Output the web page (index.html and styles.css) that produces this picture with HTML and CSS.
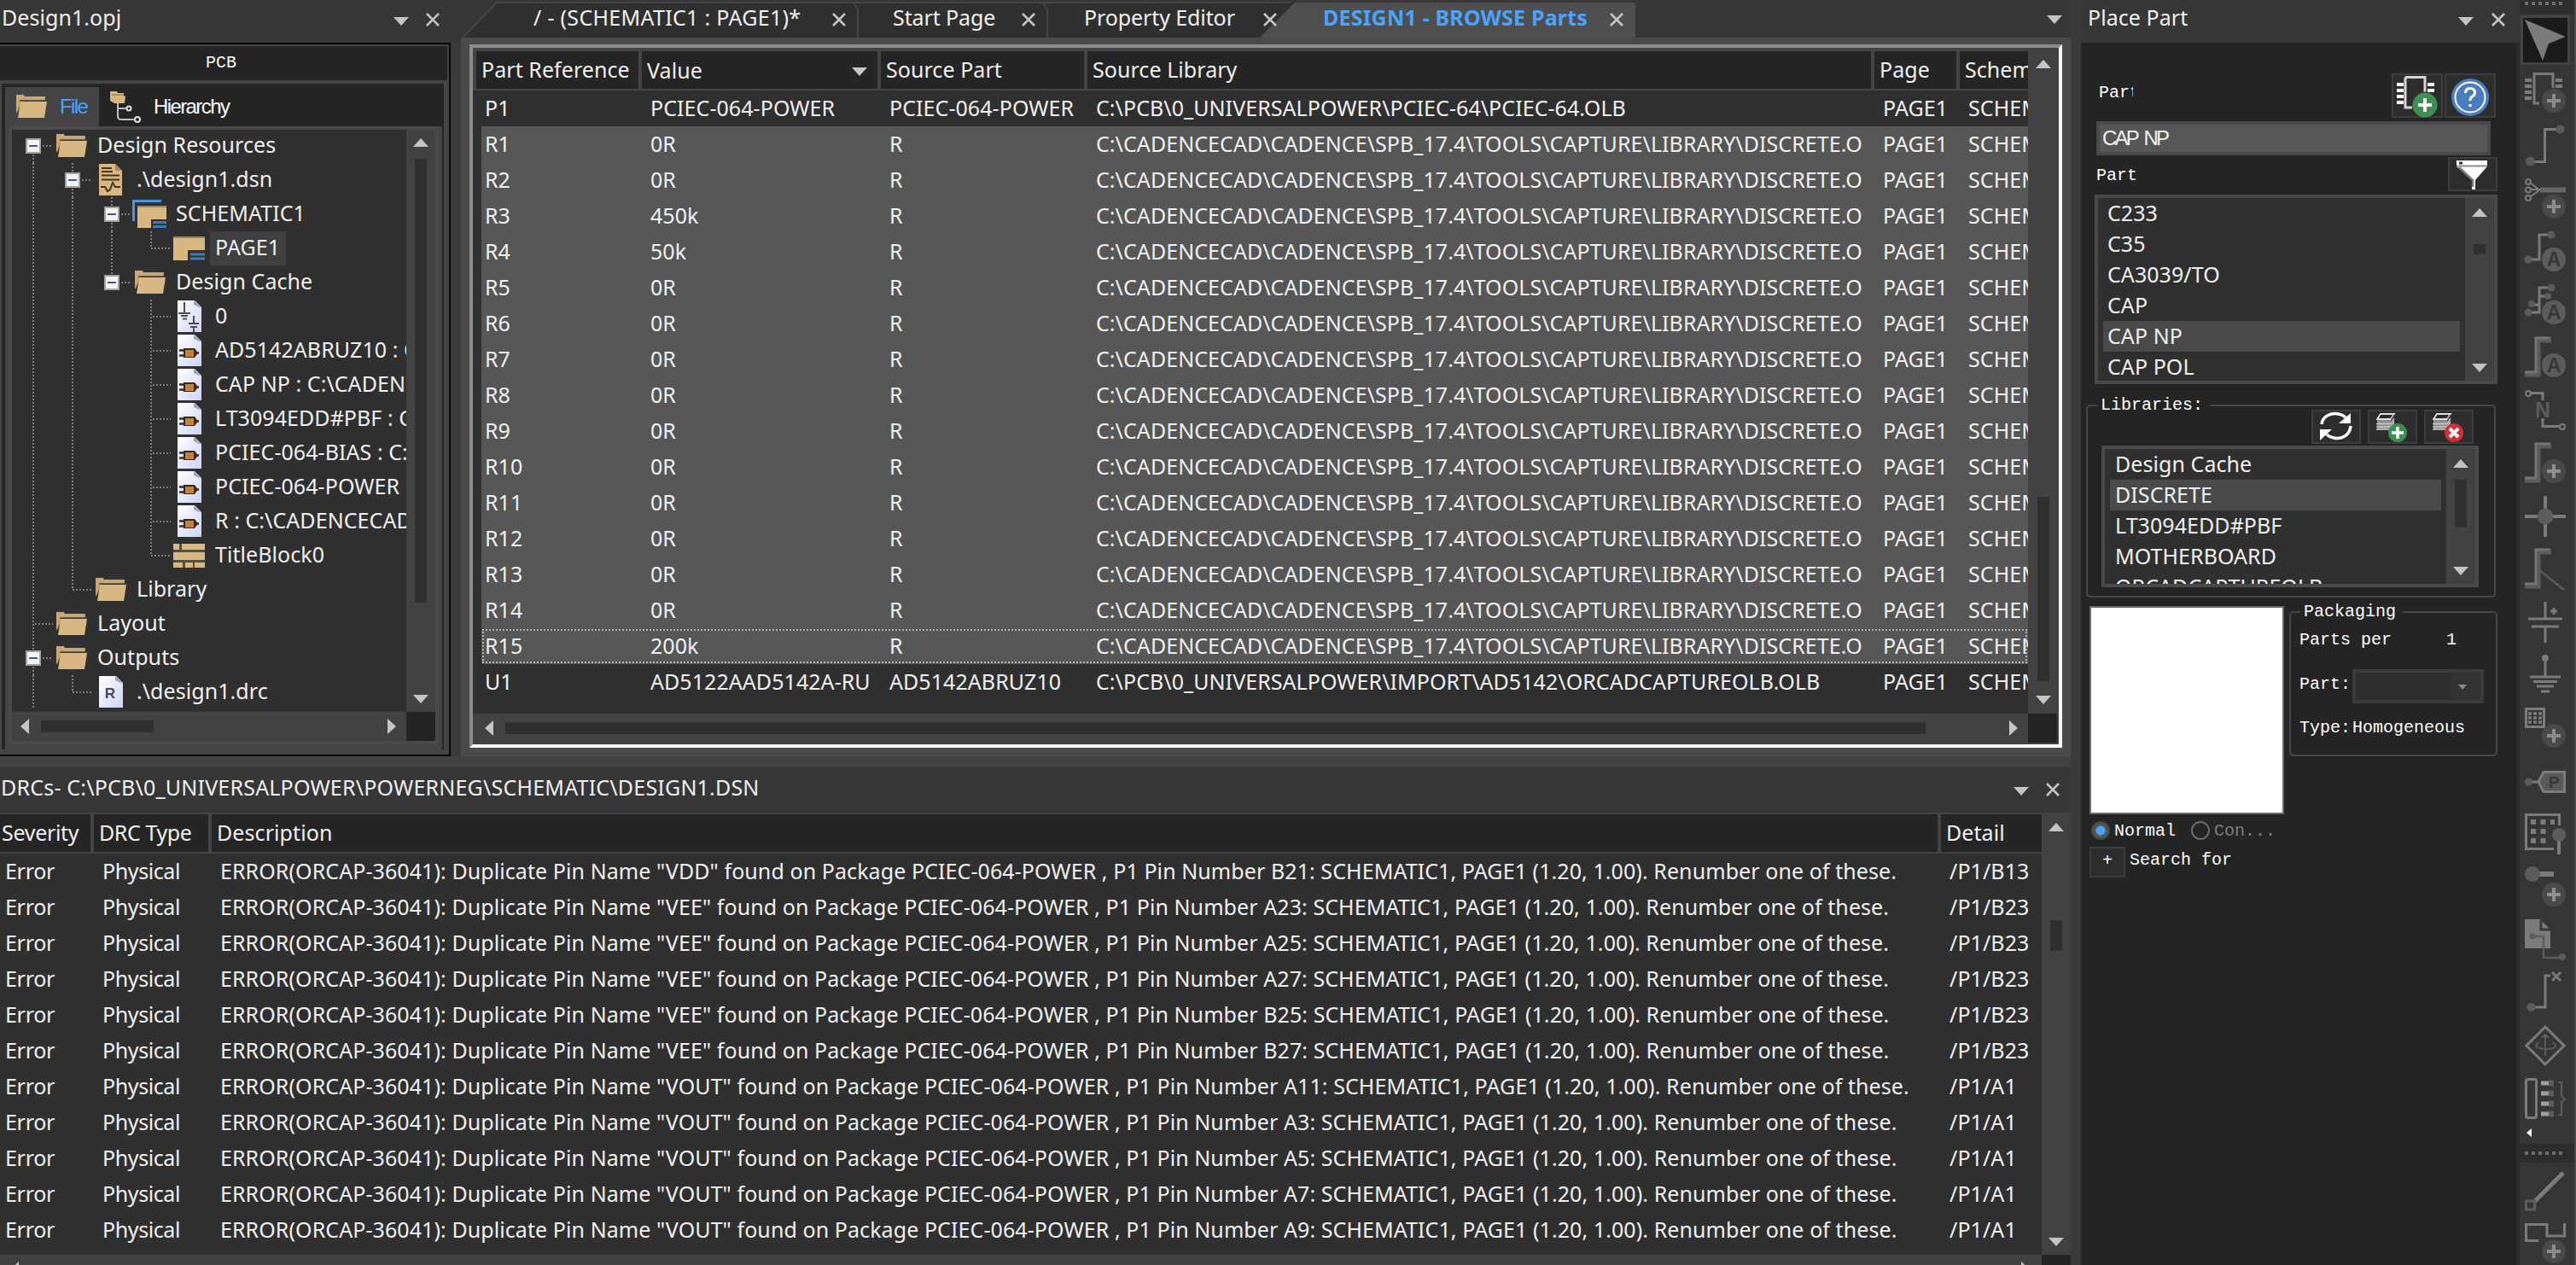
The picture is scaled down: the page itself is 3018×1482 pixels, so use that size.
FILE: index.html
```
<!DOCTYPE html>
<html lang="en">
<head>
    <meta charset="UTF-8">
    <meta name="viewport" content="width=device-width, initial-scale=1.0">
    <title>Design1.opj</title>
    <link rel="stylesheet" href="styles.css">
</head>
<body>
    <!-- shared icons -->
    <svg class="defs" width="0" height="0">
        <defs>
            <linearGradient id="paper" x1="0" y1="0" x2="1" y2="1">
                <stop offset="0" stop-color="#ffffff"/>
                <stop offset="1" stop-color="#ccd3f5"/>
            </linearGradient>
            <symbol id="i-folder" viewBox="0 0 38 30">
                <path d="M1 1h9l1 2h24v5H8L2 22H1z" fill="#b3925f"/>
                <path d="M1 1h9v2h24v4H6L2 20H1z" fill="#d9b783" opacity=".6"/>
                <path d="M6 9h31l-3 19H3z" fill="#d9b783"/>
                <path d="M5 8h32" stroke="#4a4032" stroke-width="1.500"/>
            </symbol>
            <symbol id="i-dsn" viewBox="0 0 30 40">
                <path d="M1 1h19l8 8v29H1z" fill="#d9b783"/>
                <path d="M20 1l8 8h-8z" fill="#a88755"/>
                <path d="M4 6h12M4 10h13M4 14.500h21M4 19.500h21" stroke="#40351f" stroke-width="2"/>
                <path d="M3 28h5l3 5 3-2 3-8 3 5h6" fill="none" stroke="#40351f" stroke-width="2"/>
            </symbol>
            <symbol id="i-schematic" viewBox="0 0 42 34">
                <path d="M1.500 25V1.500H34" fill="none" stroke="#4a96e0" stroke-width="3"/>
                <path d="M6 7h34v16H22v10H6z" fill="#d9b783"/>
                <path d="M6 8h34" stroke="#a08355" stroke-width="2"/>
                <path d="M24 26.500h16M24 31.500h16" stroke="#3f7ab8" stroke-width="3"/>
            </symbol>
            <symbol id="i-page" viewBox="0 0 38 28">
                <path d="M0 0h37v16H17v12H0z" fill="#d9b783"/>
                <path d="M0 1h37" stroke="#a08355" stroke-width="2"/>
                <path d="M20 21h17M20 26h17" stroke="#3f7ab8" stroke-width="3"/>
            </symbol>
            <symbol id="i-paper" viewBox="0 0 30 38">
                <path d="M1 0h20l8 8v29H1z" fill="url(#paper)"/>
                <path d="M20 0l9 9-9-4z" fill="#9a9fac"/>
            </symbol>
            <symbol id="i-power" viewBox="0 0 30 38">
                <use href="#i-paper"/>
                <path d="M9 2v12M2 15h14M5 18h8M7 21.500h5M20 18v8M14 27h12M16 31h8M20 31v6" fill="none" stroke="#4c4c55" stroke-width="2"/>
            </symbol>
            <symbol id="i-part" viewBox="0 0 30 38">
                <use href="#i-paper"/>
                <path d="M3 18.500h9M3 24.500h9M20 21.500h6" stroke="#332a22" stroke-width="2.500"/>
                <path d="M8 16h13l4 5.500-4 5.500H8z" fill="#332a22"/>
                <path d="M10 18h10v8H10z" fill="#c8813c"/>
            </symbol>
            <symbol id="i-drc" viewBox="0 0 30 38">
                <use href="#i-paper"/>
                <text x="14" y="26" text-anchor="middle" class="glyph" font-size="17" fill="#4a4a50">R</text>
            </symbol>
            <symbol id="i-title" viewBox="0 0 38 28">
                <path d="M0 0h37v28H0z" fill="#5c4f3a"/>
                <path d="M0 0h7v7H0zM10 0h27v7H10zM0 10h37v9H0zM0 22h11v6H0zM14 22h9v6h-9zM25 22h12v6H25z" fill="#d9b783"/>
            </symbol>
            <symbol id="i-tree" viewBox="0 0 38 38">
                <path d="M1 1h8l1 2h7v3l2 1-1 8H6L1 12z" fill="#d9b783"/>
                <path d="M3 5h14" stroke="#a08355" stroke-width="1.500"/>
                <path d="M10 15v15q0 4 4 4h15M10 21h10" fill="none" stroke="#bdbdbd" stroke-width="2"/>
                <circle cx="23" cy="21" r="2.500" fill="none" stroke="#e0e0e0" stroke-width="2"/>
                <circle cx="33" cy="34" r="3" fill="none" stroke="#e0e0e0" stroke-width="2"/>
            </symbol>
            <symbol id="i-minus" viewBox="0 0 18 18">
                <rect x="1" y="1" width="16" height="16" fill="#f4f4f4" stroke="#a3a3a3" stroke-width="2"/>
                <path d="M4 9h10" stroke="#41539c" stroke-width="2"/>
            </symbol>
            <symbol id="i-x" viewBox="0 0 16 16">
                <path d="M1 1l14 14M15 1L1 15" stroke="#c4c4c4" stroke-width="2.600"/>
            </symbol>
            <symbol id="i-stack" viewBox="0 0 48 34">
                <path d="M5 1h16l-4 6H1z" fill="#2a2a2a" stroke="#e0e0e0" stroke-width="1.800"/>
                <path d="M1 8h16v11H1z" fill="#8f8f8f"/>
                <path d="M17 8l4-7v12l-4 6z" fill="#4a4a4a"/>
                <path d="M0 12.500h17l4-6M0 16h17l4-6M0 19h17l4-6" fill="none" stroke="#c9c9c9" stroke-width="1.500"/>
            </symbol>
        </defs>
    </svg>

    <div class="app">
        <div class="workspace">
            <div class="upper">
                <section class="project">
                    <div class="titlebar">
                        <span>Design1.opj</span>
                        <span class="down"></span>
                        <svg class="close"><use href="#i-x"/></svg>
                    </div>
                    <div class="project-box">
                        <div class="pcb">PCB</div>
                        <div class="project-inner">
                            <div class="project-tabs">
                                <div class="ptab active"><svg width="38" height="30"><use href="#i-folder"/></svg>File</div>
                                <div class="ptab"><svg width="38" height="38"><use href="#i-tree"/></svg>Hierarchy</div>
                            </div>
                            <div class="tree-frame">
                                <div class="tree" id="tree"></div>
                                <div class="vscroll tree-v"><i class="up"></i><b></b><i class="down"></i></div>
                                <div class="hscroll tree-h"><i class="left"></i><b></b><i class="right"></i></div>
                                <div class="corner"></div>
                            </div>
                        </div>
                    </div>
                </section>

                <section class="editor">
                    <div class="tabs">
                        <svg class="tab-shapes" width="1886" height="52" viewBox="0 0 1886 52">
                            <path d="M2 44L42 3H1000V44z" fill="#303030"/>
                            <path d="M2 44L42 3H972" fill="none" stroke="#464646" stroke-width="2"/>
                            <path d="M460 3l5 8V44M682 3l5 8V44" fill="none" stroke="#464646" stroke-width="2"/>
                            <path d="M936 44L977 3H1376V44z" fill="#4f4f4f"/>
                        </svg>
                        <div class="tab t1">/ - (SCHEMATIC1 : PAGE1)*<svg class="close"><use href="#i-x"/></svg></div>
                        <div class="tab t2">Start Page<svg class="close"><use href="#i-x"/></svg></div>
                        <div class="tab t3">Property Editor<svg class="close"><use href="#i-x"/></svg></div>
                        <div class="tab t4">DESIGN1 - BROWSE Parts<svg class="close"><use href="#i-x"/></svg></div>
                        <span class="down"></span>
                    </div>
                    <div class="browse">
                        <div class="browse-main">
                            <div class="parts-row head">
                                <span>Part Reference</span><span class="sorted">Value<i class="down"></i></span><span>Source Part</span><span>Source Library</span><span>Page</span><span>Schematic</span>
                            </div>
                            <div class="parts-body" id="parts"></div>
                        </div>
                        <div class="vscroll browse-v"><i class="up"></i><b></b><i class="down"></i></div>
                        <div class="hscroll browse-h"><i class="left"></i><b></b><i class="right"></i></div>
                        <div class="corner"></div>
                    </div>
                </section>
            </div>

            <section class="drc">
                <div class="titlebar drc-title">
                    <span>DRCs- C:\PCB\0_UNIVERSALPOWER\POWERNEG\SCHEMATIC\DESIGN1.DSN</span>
                    <span class="down"></span>
                    <svg class="close"><use href="#i-x"/></svg>
                </div>
                <div class="drc-grid">
                    <div class="drc-main">
                        <div class="drc-row head"><span>Severity</span><span>DRC Type</span><span>Description</span><span>Detail</span></div>
                        <div id="errors"></div>
                    </div>
                    <div class="vscroll drc-v"><i class="up"></i><b></b><i class="down"></i></div>
                    <div class="hscroll drc-h"><i class="left"></i><b></b><i class="right"></i></div>
                    <div class="corner"></div>
                </div>
            </section>
        </div>

        <section class="place">
            <div class="titlebar place-title">
                <span>Place Part</span>
                <span class="down"></span>
                <svg class="close"><use href="#i-x"/></svg>
            </div>
            <div class="place-body">
                <div class="place-top">
                    <span class="mono clip">Part</span>
                    <div class="btn big">
                        <svg width="56" height="50" viewBox="0 0 56 50">
                            <path d="M14 2.500h23v17M14 2.500v35.500h8" fill="none" stroke="#d6d6d6" stroke-width="3"/>
                            <path d="M4 11h8M4 18h8M4 25h8M4 32h8M40 11h8M40 18h8" stroke="#f4f4f4" stroke-width="4"/>
                            <circle cx="37" cy="35" r="14.500" fill="#3d8f54"/>
                            <path d="M37 27v16M29 35h16" stroke="#fff" stroke-width="4"/>
                        </svg>
                    </div>
                    <div class="btn big">
                        <svg width="56" height="50" viewBox="0 0 56 50">
                            <circle cx="28" cy="26" r="22" fill="#4a7cc0"/>
                            <circle cx="28" cy="26" r="17.500" fill="none" stroke="#fff" stroke-width="2"/>
                            <path d="M22.500 21q0-5.500 5.500-5.500t5.500 5q0 3-3 4.500-2.500 1.500-2.500 5" fill="none" stroke="#fff" stroke-width="3"/>
                            <path d="M26.500 34h3v3h-3z" fill="#fff"/>
                        </svg>
                    </div>
                </div>
                <div class="part-input">CAP NP</div>
                <div class="part-label">
                    <span class="mono">Part</span>
                    <div class="btn">
                        <svg width="54" height="36" viewBox="0 0 54 36">
                            <path d="M8 2h36v7L30 25v11h-4V25L8 9z" fill="#fff"/>
                            <path d="M8 8.500h36" stroke="#8c8c8c" stroke-width="2"/>
                            <path d="M11 10l16 15v8" fill="none" stroke="#777" stroke-width="2.500"/>
                            <path d="M11 3.500h4v3h-4z" fill="#333"/>
                        </svg>
                    </div>
                </div>
                <div class="listbox parts-list">
                    <div class="items"><p>C233</p><p>C35</p><p>CA3039/TO</p><p>CAP</p><p class="sel">CAP NP</p><p>CAP POL</p></div>
                    <div class="vscroll"><i class="up"></i><b></b><i class="down"></i></div>
                </div>
                <div class="group libraries">
                    <span class="legend mono">Libraries:</span>
                    <div class="lib-btns">
                        <div class="btn">
                            <svg width="54" height="34" viewBox="0 0 54 34">
                                <path d="M10 15C11 5 22 1 30 3q5 1 8 4M44 17C43 29 32 33 24 31q-5-1-8-4" fill="none" stroke="#fff" stroke-width="3.500"/>
                                <path d="M44 2v12H30zM8 34V21h14z" fill="#fff"/>
                            </svg>
                        </div>
                        <div class="btn">
                            <svg width="54" height="36" viewBox="-8 -2 54 36">
                                <use href="#i-stack" width="48" height="34"/>
                                <circle cx="25" cy="23" r="11" fill="#3d8f54"/>
                                <path d="M25 16v14M18 23h14" stroke="#fff" stroke-width="3.500"/>
                            </svg>
                        </div>
                        <div class="btn">
                            <svg width="54" height="36" viewBox="-8 -2 54 36">
                                <use href="#i-stack" width="48" height="34"/>
                                <circle cx="25" cy="23" r="11" fill="#cf3035"/>
                                <path d="M20 18l10 10M30 18L20 28" stroke="#fff" stroke-width="4"/>
                            </svg>
                        </div>
                    </div>
                    <div class="listbox lib-list">
                        <div class="items"><p>Design Cache</p><p class="sel">DISCRETE</p><p>LT3094EDD#PBF</p><p>MOTHERBOARD</p><p>ORCADCAPTUREOLB</p></div>
                        <div class="vscroll"><i class="up"></i><b></b><i class="down"></i></div>
                    </div>
                </div>
                <div class="preview-row">
                    <div class="preview"></div>
                    <div class="group packaging mono">
                        <span class="legend">Packaging</span>
                        <div class="pk-per"><span>Parts per</span><span>1</span></div>
                        <div class="pk-part"><span>Part:</span><div class="combo"><i class="down"></i></div></div>
                        <div class="pk-type"><span>Type:</span><span>Homogeneous</span></div>
                    </div>
                </div>
                <div class="radios mono">
                    <span class="radio on"></span><span class="r1">Normal</span>
                    <span class="radio"></span><span class="dim">Con...</span>
                </div>
                <div class="search mono"><div class="plus">+</div><span class="search-text">Search for<br>Part</span></div>
            </div>
        </section>

        <aside class="toolbar">
            <div class="grip"></div>
            <div class="tools" id="tools"></div>
            <div class="more"><i></i></div>
            <div class="grip lower"></div>
            <div class="tools" id="draw-tools"></div>
        </aside>
    </div>
    <script src="script.js"></script>
</body>
</html>
```
FILE: styles.css
```
* {
    box-sizing: border-box;
}
body {
    margin: 0;
    background: #3a3a3a;
    color: #f0f0f0;
    font: 25px "Noto Sans", sans-serif;
    letter-spacing: 0.06px;
    overflow: hidden;
}
.defs {
    position: absolute;
}
p {
    margin: 0;
}
.app {
    display: flex;
    width: 3018px;
    height: 1482px;
    overflow: hidden;
}
.workspace {
    width: 2426px;
    display: flex;
    flex-direction: column;
}
.upper {
    display: flex;
    height: 886px;
}
.mono {
    font: 20px "Liberation Mono", monospace;
    letter-spacing: 0;
    color: #fff;
}
.glyph {
    font-family: "Liberation Sans", sans-serif;
    font-weight: bold;
}

/* arrows */
.up, .down, .left, .right {
    display: block;
    flex: none;
    width: 18px;
    height: 10px;
    background: #c4c4c4;
}
.up {
    clip-path: polygon(50% 0, 100% 100%, 0 100%);
}
.down {
    clip-path: polygon(0 0, 100% 0, 50% 100%);
}
.left, .right {
    width: 10px;
    height: 18px;
}
.left {
    clip-path: polygon(100% 0, 100% 100%, 0 50%);
}
.right {
    clip-path: polygon(0 0, 100% 50%, 0 100%);
}
.close {
    width: 16px;
    height: 16px;
    flex: none;
}

/* scroll bars */
.vscroll {
    background: #424242;
    display: flex;
    flex-direction: column;
    align-items: center;
}
.vscroll b, .hscroll b {
    display: block;
    background: #303030;
}
.vscroll b {
    width: 14px;
}
.hscroll b {
    height: 14px;
}
.vscroll .down {
    margin-top: auto;
}
.hscroll {
    background: #424242;
    display: flex;
    align-items: center;
}
.hscroll .right {
    margin-left: auto;
}
.corner {
    background: #252525;
}

.titlebar {
    height: 50px;
    background: #373737;
    display: flex;
    line-height: 40px;
    white-space: nowrap;
}
.titlebar .down {
    margin: 20px 0 0 auto;
}
.titlebar .close {
    margin: 15px 0 0 20px;
}

/* project tree */
.project {
    width: 540px;
    background: #3b3b3b;
}
.project .titlebar {
    padding: 0 25px 0 2px;
}
.project-box {
    width: 528px;
    height: 836px;
    border: 2px solid #060606;
    border-left: 0;
    background: #444;
    padding: 2px 2px 0 0;
}
.pcb {
    height: 40px;
    background: #252525;
    font: 20px/40px "Liberation Mono", monospace;
    letter-spacing: 0;
    color: #fff;
    text-align: center;
    padding-right: 6px;
}
.project-inner {
    margin: 4px 4px 0 2px;
    height: 780px;
    background: #444;
    border-right: 2px solid #252525;
    border-left: 4px solid #252525;
}
.project-tabs {
    height: 50px;
    background: #252525;
    display: flex;
    padding-top: 4px;
    margin-right: -2px;
}
.ptab {
    display: flex;
    align-items: center;
    font: 24px "Liberation Sans", sans-serif;
    letter-spacing: -1.6px;
    color: #fff;
    padding-left: 12px;
    gap: 14px;
}
.ptab.active {
    width: 110px;
    background: #444;
    color: #4aa3ff;
}
.tree-frame {
    border: 4px solid #4a4a4a;
    margin-left: 4px;
    width: 504px;
    height: 724px;
    display: grid;
    grid-template: 682px 34px / 462px 34px;
}
.tree {
    background: #303030;
    overflow: hidden;
}
.node {
    display: flex;
    align-items: center;
    height: 40px;
    padding-left: 2px;
    white-space: nowrap;
    position: relative;
    top: -1px;
}
.node .cell {
    width: 46px;
    height: 40px;
    flex: none;
}
.node .icon {
    width: 46px;
    flex: none;
    display: flex;
    justify-content: center;
    padding-right: 2px;
}
.node .label {
    height: 40px;
    line-height: 36px;
    padding: 0 7px 0 6px;
}
.node .label.sel {
    background: #404040;
}
.tree-v {
    padding: 10px 0;
}
.tree-v b {
    margin-top: 14px;
    height: 520px;
}
.tree-h {
    padding: 0 12px 0 10px;
}
.tree-h b {
    margin-left: 14px;
    width: 132px;
}

/* editor */
.editor {
    width: 1886px;
    background: #4a4a4a;
}
.tabs {
    height: 44px;
    background: #373737;
    display: flex;
    position: relative;
    line-height: 40px;
    letter-spacing: 0.3px;
    white-space: nowrap;
    overflow: hidden;
}
.tab-shapes {
    position: absolute;
    left: 0;
    top: 0;
}
.tab {
    position: relative;
    display: flex;
    justify-content: space-between;
}
.tab .close {
    margin-top: 15px;
}
.t1 {
    margin-left: 85px;
    width: 366px;
}
.t2 {
    margin-left: 55px;
    width: 167px;
    letter-spacing: -0.1px;
}
.t3 {
    margin-left: 57px;
    width: 226px;
    letter-spacing: -0.1px;
}
.t4 {
    margin-left: 54px;
    width: 352px;
    color: #4aa3ff;
    font-weight: bold;
    letter-spacing: 0.2px;
}
.tabs > .down {
    margin: 18px 0 0 496px;
}
.browse {
    margin: 8px 0 0 10px;
    width: 1866px;
    height: 824px;
    border: 4px solid;
    border-color: #8c8c8c #f6f6f6 #f6f6f6 #8c8c8c;
    background: #424242;
    display: grid;
    grid-template: 780px 36px / 1822px 36px;
}
.browse-main {
    background: #303030;
    overflow: hidden;
}
.parts-row {
    display: grid;
    grid-template-columns: 194px 280px 242px 922px 100px 200px;
    height: 42px;
    line-height: 41px;
    white-space: nowrap;
}
.parts-row span {
    overflow: hidden;
}
.parts-row.head, .drc-row.head {
    background: #252525;
    line-height: 43px;
}
.parts-row.head {
    height: 50px;
    border-top: 4px solid #444;
    border-bottom: 2px solid #444;
    border-left: 4px solid #444;
}
.parts-row.head span {
    border-right: 4px solid #444;
    padding-left: 6px;
}
.sorted {
    display: flex;
    justify-content: space-between;
    align-items: center;
}
.sorted .down {
    margin: 4px 12px 0 0;
}
.parts-body .parts-row {
    margin-left: 10px;
}
.parts-body .parts-row span {
    padding-left: 4px;
}
.parts-row.sel {
    background: #575757;
}
.parts-row.focus {
    outline: 2px dotted #b4b4b4;
    outline-offset: -3px;
}
.browse-v {
    padding: 14px 0 11px;
}
.browse-v b {
    margin-top: 502px;
    height: 216px;
}
.browse-h {
    padding: 0 12px 2px 14px;
}
.browse-h b {
    margin-left: 14px;
    width: 1664px;
}
.browse .corner {
    margin: 0 2px 2px 0;
}

/* DRC list */
.drc {
    border-top: 12px solid #424242;
    height: 596px;
}
.drc-title {
    height: 54px;
    line-height: 48px;
    padding: 0 13px 0 1px;
    letter-spacing: 0.2px;
}
.drc-title .down {
    margin-top: 24px;
}
.drc-title .close {
    margin-top: 19px;
}
.drc-grid {
    display: grid;
    grid-template: 518px 12px / 2392px 34px;
}
.drc-main {
    background: #303030;
    overflow: hidden;
}
.drc-row {
    display: grid;
    grid-template-columns: 110px 138px 2026px 118px;
    height: 42px;
    line-height: 41px;
    letter-spacing: 0.08px;
    white-space: nowrap;
}
.drc-row span {
    padding-left: 10px;
}
.drc-row span:first-child {
    padding-left: 6px;
    letter-spacing: -0.3px;
}
.drc-row span:nth-child(2) {
    letter-spacing: -0.4px;
}
.drc-row.head {
    height: 48px;
    border-top: 2px solid #444;
    border-bottom: 2px solid #444;
}
.drc-row.head span {
    border-right: 4px solid #444;
    padding-left: 6px;
}
.drc-row.head span:first-child {
    padding-left: 2px;
    letter-spacing: -0.3px;
}
.drc-row.head span:last-child {
    border-right: 0;
}
.drc-v {
    padding: 12px 0 10px;
}
.drc-v b {
    margin-top: 104px;
    height: 36px;
}
.drc-h {
    padding: 16px 14px 0 12px;
    height: 12px;
    overflow: hidden;
}
.drc-h .left, .drc-h .right {
    margin-bottom: -2px;
}

/* place part */
.place {
    width: 526px;
    background: #252525;
    border-left: 12px solid #3b3b3b;
    border-right: 4px solid #2c2c2c;
}
.place-title {
    padding: 0 17px 0 8px;
    margin-right: -4px;
}
.place-title .close {
    margin-left: 21px;
}
.place-body {
    padding: 36px 22px 0 6px;
}
.place-top {
    display: flex;
    height: 56px;
    gap: 2px;
    padding: 0 2px 0 15px;
}
.place-top .clip {
    width: 40px;
    overflow: hidden;
    line-height: 46px;
    margin-right: auto;
}
.btn {
    width: 58px;
    height: 40px;
    border: 2px solid #3d3d3d;
    background: #2d2d2d;
    flex: none;
}
.btn.big {
    width: 60px;
    height: 52px;
}
.btn svg {
    display: block;
}
.part-input {
    margin: 0 8px 0 12px;
    height: 40px;
    border: 4px solid #4a4a4a;
    background: #575757;
    font: 24px/31px "Liberation Sans", sans-serif;
    letter-spacing: -2.8px;
    word-spacing: 4px;
    padding-left: 3px;
}
.part-label {
    display: flex;
    justify-content: space-between;
    height: 40px;
    margin: 2px 0 4px 12px;
}
.part-label .mono {
    line-height: 44px;
}
.listbox {
    border: 4px solid #4a4a4a;
    background: #303030;
    display: flex;
    overflow: hidden;
}
.items {
    flex: 1;
    overflow: hidden;
    padding: 0 6px;
}
.items p {
    height: 36px;
    line-height: 34px;
    padding-left: 6px;
}
.items .sel {
    background: #4a4a4a;
}
.listbox .vscroll {
    width: 34px;
    padding: 12px 0 10px;
}
.parts-list {
    width: 472px;
    height: 222px;
    margin-left: 10px;
}
.parts-list .items p {
    padding-left: 5px;
}
.parts-list .vscroll b {
    margin-top: 32px;
    height: 12px;
}
.group {
    border: 2px solid #464646;
    border-radius: 5px;
    position: relative;
}
.legend {
    position: absolute;
    top: -13px;
    left: 11px;
    background: #252525;
    padding: 0 8px 0 4px;
    line-height: 24px;
}
.libraries {
    width: 480px;
    height: 226px;
    margin-top: 24px;
}
.lib-btns {
    display: flex;
    gap: 8px;
    justify-content: flex-end;
    padding: 4px 24px 2px 0;
}
.lib-list {
    width: 442px;
    height: 166px;
    margin-left: 16px;
}
.lib-list .vscroll b {
    margin-top: 14px;
    height: 56px;
}
.preview-row {
    display: flex;
    gap: 6px;
    margin-top: 10px;
}
.preview {
    width: 228px;
    height: 244px;
    background: #fff;
    border: 2px solid #6b6b6b;
    margin-left: 4px;
}
.packaging {
    width: 244px;
    height: 170px;
    margin-top: 6px;
    padding: 18px 0 0 10px;
    line-height: 28px;
    flex: none;
}
.packaging .legend {
    left: 11px;
}
.pk-per {
    display: flex;
    justify-content: space-between;
    padding-right: 46px;
}
.pk-part {
    display: flex;
    margin-top: 20px;
    line-height: 36px;
    justify-content: space-between;
    padding-right: 14px;
}
.combo {
    width: 154px;
    height: 40px;
    border: 4px solid #3b3b3b;
    background: linear-gradient(90deg, #2d2d2d 112px, #333 112px);
    display: flex;
    justify-content: flex-end;
    padding: 14px 16px 0 0;
}
.combo .down {
    width: 10px;
    height: 6px;
    background: #8a8a8a;
}
.pk-type {
    display: flex;
    gap: 2px;
    margin-top: 15px;
}
.radios {
    display: flex;
    align-items: center;
    height: 38px;
    padding-left: 6px;
}
.radio {
    width: 22px;
    height: 22px;
    border-radius: 50%;
    border: 2px solid #6b6b6b;
}
.radio.on {
    background: radial-gradient(#4aa3ff 5px, #555 6px);
    border-color: #484848;
}
.r1 {
    margin: 0 18px 0 5px;
}
.dim {
    color: #7d7d7d;
    margin-left: 5px;
}
.search {
    display: flex;
    padding-left: 4px;
    gap: 5px;
    height: 36px;
    overflow: hidden;
}
.plus {
    width: 42px;
    height: 36px;
    border: 2px solid #3d3d3d;
    background: #2d2d2d;
    text-align: center;
    line-height: 30px;
}
.search-text {
    line-height: 30px;
    padding-top: 1px;
}

/* tool bar */
.toolbar {
    width: 66px;
    background: #363636;
    border-right: 2px solid #4a4a4a;
}
.grip {
    height: 16px;
    background: #2e2e2e;
    padding: 2px 0 0 6px;
}
.grip::before {
    content: "";
    display: block;
    width: 44px;
    height: 4px;
    background: repeating-linear-gradient(90deg, #6c6c6c 0 4px, transparent 4px 8px);
}
.grip.lower {
    height: 22px;
    padding-top: 9px;
}
.tool {
    height: 62px;
    width: 60px;
    display: flex;
    align-items: center;
    justify-content: center;
}
.tool.active {
    background: #1a1a1a;
    border: 3px solid #444;
    height: 58px;
    width: 58px;
    margin: 2px 1px;
}
.tool svg {
    width: 48px;
    height: 48px;
    fill: none;
    stroke: #7b7b7b;
    stroke-width: 3;
    overflow: visible;
}
.tool .f {
    fill: #5c5c5c;
    stroke: none;
}
.tool .l {
    fill: #7b7b7b;
    stroke: none;
}
.tool .d {
    stroke: #5c5c5c;
}
.tool .t {
    fill: #383838;
    stroke: none;
}
.more {
    height: 22px;
    padding: 4px 0 0 8px;
}
.more i {
    display: block;
    width: 6px;
    height: 10px;
    background: #fff;
    clip-path: polygon(100% 0, 100% 100%, 0 50%);
}
#draw-tools {
    padding-top: 2px;
}
```
FILE: script.js
```
// ---- project tree ----
// guides: v = line, t = tee, l = elbow, space = empty
// b = box with line below, m = line above and below, a = line above
const nodes = [
    ['b', 'folder', 'Design Resources'],
    ['vm', 'dsn', '.\\design1.dsn'],
    ['vvm', 'schematic', 'SCHEMATIC1'],
    ['vvvl', 'page', 'PAGE1', true],
    ['vva', 'folder', 'Design Cache'],
    ['vv t', 'power', '0'],
    ['vv t', 'part', 'AD5142ABRUZ10 : C:\\CADENCECAD'],
    ['vv t', 'part', 'CAP NP : C:\\CADENCECAD'],
    ['vv t', 'part', 'LT3094EDD#PBF : C:\\PCB'],
    ['vv t', 'part', 'PCIEC-064-BIAS : C:\\PCB'],
    ['vv t', 'part', 'PCIEC-064-POWER : C:\\PCB'],
    ['vv t', 'part', 'R : C:\\CADENCECAD\\CADENCE'],
    ['vv l', 'title', 'TitleBlock0'],
    ['vl', 'folder', 'Library'],
    ['t', 'folder', 'Layout'],
    ['m', 'folder', 'Outputs'],
    ['vl', 'drc', '.\\design1.drc']
];

const iconSize = {
    folder: [38, 30], dsn: [30, 40], schematic: [42, 34], page: [38, 28],
    power: [30, 38], part: [30, 38], drc: [30, 38], title: [38, 28]
};

const guidePath = {
    v: 'M23 0V40',
    t: 'M23 0V40M25 20H46',
    l: 'M23 0V20H46',
    b: 'M23 30V40M34 20H46',
    m: 'M23 0V10M23 30V40M34 20H46',
    a: 'M23 0V10M34 20H46',
    ' ': ''
};

function guide(type) {
    let box = '';
    if ('bma'.includes(type)) {
        box = '<use href="#i-minus" x="14" y="11" width="18" height="18"/>';
    }
    return `<svg class="cell" viewBox="0 0 46 40">
        <path d="${guidePath[type]}" fill="none" stroke="#7d7d7d" stroke-width="2" stroke-dasharray="2 2"/>${box}</svg>`;
}

document.getElementById('tree').innerHTML = nodes.map(([guides, icon, label, sel]) => {
    const [w, h] = iconSize[icon];
    return `<div class="node">${[...guides].map(guide).join('')}
        <span class="icon"><svg width="${w}" height="${h}"><use href="#i-${icon}"/></svg></span>
        <span class="label${sel ? ' sel' : ''}">${label}</span></div>`;
}).join('');

// ---- parts table ----
const discrete = 'C:\\CADENCECAD\\CADENCE\\SPB_17.4\\TOOLS\\CAPTURE\\LIBRARY\\DISCRETE.O';
const values = { 3: '450k', 4: '50k', 15: '200k' };
const parts = [['P1', 'PCIEC-064-POWER', 'PCIEC-064-POWER', 'C:\\PCB\\0_UNIVERSALPOWER\\PCIEC-64\\PCIEC-64.OLB', '']];
for (let i = 1; i <= 15; i++) {
    parts.push(['R' + i, values[i] || '0R', 'R', discrete, i === 15 ? 'sel focus' : 'sel']);
}
parts.push(['U1', 'AD5122AAD5142A-RU', 'AD5142ABRUZ10', 'C:\\PCB\\0_UNIVERSALPOWER\\IMPORT\\AD5142\\ORCADCAPTUREOLB.OLB', '']);

document.getElementById('parts').innerHTML = parts.map(([ref, value, part, lib, cls]) =>
    `<div class="parts-row ${cls}"><span>${ref}</span><span>${value}</span><span>${part}</span><span>${lib}</span><span>PAGE1</span><span>SCHEMATIC1</span></div>`
).join('');

// ---- DRC errors ----
const errors = [
    ['VDD', 'B21', 'B13'],
    ['VEE', 'A23', 'B23'],
    ['VEE', 'A25', 'B23'],
    ['VEE', 'A27', 'B23'],
    ['VEE', 'B25', 'B23'],
    ['VEE', 'B27', 'B23'],
    ['VOUT', 'A11', 'A1'],
    ['VOUT', 'A3', 'A1'],
    ['VOUT', 'A5', 'A1'],
    ['VOUT', 'A7', 'A1'],
    ['VOUT', 'A9', 'A1']
];

document.getElementById('errors').innerHTML = errors.map(([name, pin, detail]) =>
    `<div class="drc-row"><span>Error</span><span>Physical</span><span>ERROR(ORCAP-36041): Duplicate Pin Name "${name}" found on Package PCIEC-064-POWER , P1 Pin Number ${pin}: SCHEMATIC1, PAGE1 (1.20, 1.00). Renumber one of these.</span><span>/P1/${detail}</span></div>`
).join('');

// ---- tool bar ----
const plus = '<circle cx="34" cy="33" r="14" fill="#4a4a4a" stroke="none"/><path d="M34 25v16M26 33h16" stroke="#8c8c8c" stroke-width="4"/>';
const badgeA = '<circle class="f" cx="34" cy="33" r="14"/><text class="t glyph" x="34" y="41" font-size="23" text-anchor="middle">A</text>';
const bus = '<path d="M31 3H15V43H0" stroke="#5c5c5c" stroke-width="7"/><path d="M29 1H13V41H0" stroke="#747474" stroke-width="3"/>';

const tools = [
    '<path class="l" d="M0 0L48 20 28 28 21 48z"/>',
    '<path d="M17 36H11V1.500H33V18"/><path d="M0 9h8M0 16h8M0 23h8M0 30h8M36 9h8M36 16h8" stroke-width="4"/>' + plus,
    '<path d="M7 42.500H23.500V4.500H41"/><circle class="f" cx="6.500" cy="42" r="5.500"/><circle class="f" cx="41.500" cy="4.500" r="5"/>',
    '<path d="M6 5l12 9M6 13h12M6 22l12-9" stroke-width="2"/><path d="M18 13.500H48" stroke="#666" stroke-width="6"/><g stroke-width="2"><circle cx="4" cy="4" r="3"/><circle cx="4" cy="13.500" r="3"/><circle cx="4" cy="23" r="3"/></g>' + plus,
    '<path d="M4 33H17V4H31"/><circle class="f" cx="4" cy="33" r="4.500"/><circle class="f" cx="31" cy="4" r="4.500"/>' + badgeA,
    '<path d="M4 33H17V4H31M17 14h10M8 24h9"/><circle class="f" cx="4" cy="33" r="4.500"/><circle class="f" cx="31" cy="4" r="4.500"/><circle class="f" cx="27" cy="14" r="4"/><circle class="f" cx="8" cy="23" r="4"/>' + badgeA,
    bus + badgeA,
    '<path d="M7 3.500H21V12M21 33V42.500H41"/><circle cx="4" cy="4" r="3" stroke-width="2"/><circle cx="44" cy="43" r="3" stroke-width="2"/><text class="f glyph" x="21" y="32" font-size="25" text-anchor="middle">N</text>',
    bus + plus,
    '<path d="M24 0V48M0 24H48" stroke-width="4"/><circle class="f" cx="24" cy="24" r="9.500"/>',
    bus + '<path class="d" d="M17 25L46 48" stroke-width="2.500"/>',
    '<path d="M24 0V20M4 20H44M8 29H40M24 29V48M34 7v8M30 11h8"/>',
    '<path d="M24 5V26M6 26H42"/><path d="M10 31.500H38M14 37H34M19 43H29"/><circle class="l" cx="24" cy="4" r="4"/>',
    '<path d="M1.500 1.500H22.500V22.500H1.500z"/><path d="M4 7h16M4 12h16M4 17h16" stroke-width="3.500" stroke-dasharray="4 2"/>' + plus,
    '<path d="M4 25H17"/><path d="M22 13.500H46.500V36.500H22L16 25z" fill="#595959"/><circle class="f" cx="4.500" cy="25" r="4.500"/><text class="t glyph" x="34" y="32" font-size="19" text-anchor="middle">P</text>',
    '<path d="M34 41.500H1.500V1.500H40.500V14"/><path d="M7 10h28M7 21h18M7 32h18" stroke-width="6" stroke-dasharray="6 5.500"/><circle class="f" cx="40" cy="25" r="8"/><path d="M40 32V48" stroke-width="4"/>',
    '<path d="M14 9H34" stroke-width="6"/><circle class="f" cx="9" cy="9" r="9"/>' + plus,
    '<path class="l" d="M0 0H18L30 12V34H0z"/><path d="M19 1V12H30" stroke="#3a3a3a"/><path d="M10 20H22V45H42" stroke="#5c5c5c" stroke-width="2.500"/><circle class="f" cx="9" cy="20" r="3.500"/><circle class="f" cx="44" cy="44" r="4"/>',
    '<path d="M8 41H24V4H30"/><path d="M32 0l10 10M42 0L32 10"/><circle class="f" cx="7.500" cy="41" r="5"/>',
    '<path d="M24 2L46 24 24 46 2 24z"/><path class="d" d="M24 12V36M20 15l4-4 4 4M16 20q-8 7 8 8 18 0 9-8" stroke-width="2"/>',
    '<rect x="1.500" y="1.500" width="12" height="45" rx="2"/><path d="M19 6H28M19 18H28M19 30H28M19 42H28" stroke-width="5" stroke="#a0a0a0"/><path class="d" d="M28 6h6M28 18h6M28 30h6M28 42h6" stroke-width="7"/><path class="d" d="M39 5h4V21l4 3.500-4 3.500V43h-4" stroke-width="2"/>'
];

const drawTools = [
    '<path d="M10 38L45 3" stroke-width="5"/><rect class="d" x="1.500" y="36" width="10" height="10"/>',
    '<path d="M16 20.500H1.500V1.500H26V15H46.500V0"/>' + plus
];

function toolHtml(svg) {
    return `<div class="tool"><svg viewBox="0 0 48 48">${svg}</svg></div>`;
}

document.getElementById('tools').innerHTML = tools.map(toolHtml).join('');
document.querySelector('#tools .tool').classList.add('active');
document.getElementById('draw-tools').innerHTML = drawTools.map(toolHtml).join('');
```
